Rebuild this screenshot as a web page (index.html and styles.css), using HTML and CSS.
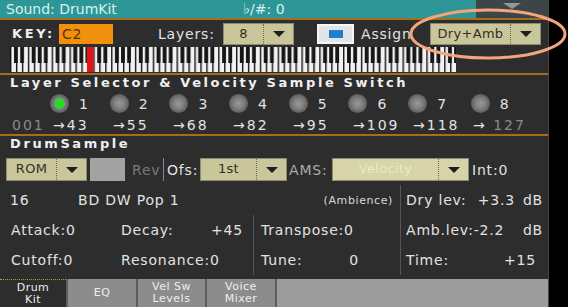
FILE: index.html
```html
<!DOCTYPE html>
<html lang="en">
<head>
  <meta charset="UTF-8">
  <meta name="viewport" content="width=device-width, initial-scale=1.0">
  <title>Sound: DrumKit</title>
  <link rel="stylesheet" href="styles.css">
</head>
<body>
  <div class="screen">

    <!-- Title bar -->
    <div class="title-bar">
      <span class="title">Sound: DrumKit</span>
      <span class="transpose"><span class="flat">♭</span>/#: 0</span>
      <div class="menu-tab"><span class="menu-arrow"></span></div>
    </div>

    <!-- Key / Layers / Assign row -->
    <div class="key-row">
      <span class="head key-label">KEY:</span>
      <span class="key-box">C2</span>
      <span class="layers-label">Layers:</span>
      <div class="select layers-select"><span class="val">8</span><span class="arrow"></span></div>
      <span class="check"><span class="check-mark"></span></span>
      <span class="assign-label">Assign</span>
      <div class="select assign-select"><span class="val">Dry+Amb</span><span class="arrow"></span></div>
    </div>

    <svg class="keyboard" width="446" height="25" viewBox="0 0 446 25">
      <defs>
        <pattern id="octave" width="41.63" height="25" patternUnits="userSpaceOnUse">
          <rect width="41.63" height="25" fill="#f2f2f2"/>
          <g fill="#151515">
            <rect x="0" width="1.4" height="25"/>
            <rect x="5.95" width="1.4" height="25"/>
            <rect x="11.89" width="1.4" height="25"/>
            <rect x="17.84" width="1.4" height="25"/>
            <rect x="23.79" width="1.4" height="25"/>
            <rect x="29.73" width="1.4" height="25"/>
            <rect x="35.68" width="1.4" height="25"/>
            <rect x="4.0" width="3.8" height="16"/>
            <rect x="10.2" width="3.8" height="16"/>
            <rect x="21.7" width="3.8" height="16"/>
            <rect x="27.8" width="3.8" height="16"/>
            <rect x="33.9" width="3.8" height="16"/>
          </g>
        </pattern>
      </defs>
      <rect width="446" height="25" fill="url(#octave)"/>
      <rect x="77" width="6.5" height="25" fill="#e3141a"/>
    </svg>

    <!-- Layer Selector -->
    <div class="section layer-section">
      <div class="head section-title">Layer Selector &amp; Velocity Sample Switch</div>
      <div class="layer-row">
        <div class="layer"><span class="knob on"></span><span class="num">1</span></div>
        <div class="layer"><span class="knob"></span><span class="num">2</span></div>
        <div class="layer"><span class="knob"></span><span class="num">3</span></div>
        <div class="layer"><span class="knob"></span><span class="num">4</span></div>
        <div class="layer"><span class="knob"></span><span class="num">5</span></div>
        <div class="layer"><span class="knob"></span><span class="num">6</span></div>
        <div class="layer"><span class="knob"></span><span class="num">7</span></div>
        <div class="layer last"><span class="knob"></span><span class="num">8</span></div>
      </div>
      <div class="vel-row">
        <span class="vel-start">001</span>
        <span class="vel">→43</span>
        <span class="vel">→55</span>
        <span class="vel">→68</span>
        <span class="vel">→82</span>
        <span class="vel">→95</span>
        <span class="vel">→109</span>
        <span class="vel">→118</span>
        <span class="vel">→ <span class="dim">127</span></span>
      </div>
    </div>

    <!-- Drum Sample -->
    <div class="section sample-section">
      <div class="head section-title">DrumSample</div>
      <div class="ctrl-row">
        <div class="select rom-select"><span class="val">ROM</span><span class="arrow"></span></div>
        <span class="rev-box"></span>
        <span class="rev-label">Rev</span>
        <span class="vline"></span>
        <span class="ofs-label">Ofs:</span>
        <div class="select ofs-select"><span class="val">1st</span><span class="arrow"></span></div>
        <span class="ams-label">AMS:</span>
        <div class="select ams-select disabled"><span class="val">Velocity</span><span class="arrow"></span></div>
        <span class="int-label">Int:0</span>
      </div>

      <div class="info-row">
        <div class="cell cell-ab">
          <span class="sample-num">16</span>
          <span class="sample-name">BD DW Pop 1</span>
          <span class="sample-cat">(Ambience)</span>
        </div>
        <div class="cell cell-c">
          <span class="lbl">Dry lev:</span>
          <span class="value">+3.3</span>
          <span class="unit">dB</span>
        </div>
      </div>

      <div class="info-row">
        <div class="cell cell-a">
          <span class="first">Attack:0</span>
          <span class="lbl">Decay:</span>
          <span class="value">+45</span>
        </div>
        <div class="cell cell-b">
          <span class="lbl">Transpose:0</span>
        </div>
        <div class="cell cell-c">
          <span class="lbl">Amb.lev:-2.2</span>
          <span class="unit">dB</span>
        </div>
      </div>

      <div class="info-row">
        <div class="cell cell-a">
          <span class="first">Cutoff:0</span>
          <span class="lbl">Resonance:0</span>
        </div>
        <div class="cell cell-b">
          <span class="lbl">Tune:</span>
          <span class="value tune-value">0</span>
        </div>
        <div class="cell cell-c">
          <span class="lbl">Time:</span>
          <span class="value time-value">+15</span>
        </div>
      </div>
    </div>

    <!-- Page tabs -->
    <div class="tabs">
      <div class="tab active" style="width:66px">Drum<br>Kit</div>
      <div class="tab" style="width:68px">EQ</div>
      <div class="tab" style="width:67px">Vel Sw<br>Levels</div>
      <div class="tab" style="width:68px">Voice<br>Mixer</div>
      <div class="tab-fill"></div>
    </div>

    <!-- Highlight annotation -->
    <svg class="annot" width="162" height="56" viewBox="0 0 162 56">
      <ellipse cx="80" cy="27" rx="77" ry="24" fill="none" stroke="#f3a57c" stroke-width="3"/>
    </svg>
  </div>
</body>
</html>
```

FILE: styles.css
```css
/* Base */
* {
  box-sizing: border-box;
}

body {
  margin: 0;
  background: #000;
  font-family: "DejaVu Sans", sans-serif;
  font-size: 14px;
  color: #e2e2e2;
  letter-spacing: 0.8px;
  overflow: hidden;
}

.screen {
  position: relative;
  width: 549px;
  height: 307px;
  background: #2d2d2d;
  border-right: 1px solid #444;
}

.head {
  font-weight: bold;
  font-size: 13px;
  letter-spacing: 2.6px;
  color: #f0f0f0;
}

/* Title bar */
.title-bar {
  display: flex;
  align-items: center;
  height: 20px;
  background: #2e9696;
  border-bottom: 2px solid #a86c1e;
  color: #d4f2ee;
  letter-spacing: 0;
}

.title {
  width: 243px;
  padding-left: 6px;
}

.transpose {
  flex: 1;
}

.flat {
  font-size: 15px;
}

.menu-tab {
  width: 72px;
  height: 18px;
  background: #3c4646;
  display: flex;
  justify-content: center;
  padding-top: 3px;
}

.menu-arrow {
  height: 0;
  border-left: 9px solid transparent;
  border-right: 9px solid transparent;
  border-top: 6px solid #8c9a9a;
}

/* Key row */
.key-row {
  display: flex;
  align-items: center;
  height: 27px;
}

.key-label {
  margin-left: 12px;
  width: 47px;
}

.key-box {
  width: 54px;
  height: 20px;
  line-height: 20px;
  padding-left: 3px;
  background: #f0900c;
  color: #5a3000;
}

.layers-label {
  margin-left: 45px;
  width: 65px;
}

.layers-select {
  width: 71px;
}

.check {
  margin-left: 23px;
  width: 37px;
  height: 20px;
  background: #e4e4e4;
  border: 2px solid #f6f6f6;
  display: flex;
  align-items: center;
  justify-content: center;
}

.check-mark {
  width: 14px;
  height: 8px;
  background: #1e7fd0;
}

.assign-label {
  margin-left: 7px;
  width: 69px;
}

.assign-select {
  width: 111px;
}

/* Select boxes */
.select {
  display: flex;
  height: 22px;
  background: #c9c69c;
  border: 1px solid #8e8c70;
  color: #33311f;
  font-size: 13px;
  letter-spacing: 0.3px;
}

.select .val {
  flex: 1;
  text-align: center;
  line-height: 20px;
  border-right: 1px dotted #6e6b50;
}

.select .arrow {
  width: 29px;
  display: flex;
  align-items: center;
  justify-content: center;
}

.select .arrow::before {
  content: "";
  border-left: 6px solid transparent;
  border-right: 6px solid transparent;
  border-top: 6px solid #1e1e1e;
}

.select.disabled {
  background: #d6d4a8;
  color: #ebe9c8;
}

/* Keyboard */
.keyboard {
  display: block;
  margin-left: 10px;
}

/* Sections */
.section {
  border-top: 2px solid #a86c1e;
}

.layer-section {
  margin-top: 1px;
}

.section-title {
  line-height: 15px;
  padding-left: 10px;
}

.layer-row {
  display: flex;
  align-items: center;
  height: 27px;
  padding-left: 50px;
}

.layer {
  display: flex;
  align-items: center;
  width: 59.7px;
}

.layer.last {
  margin-left: 3px;
}

.knob {
  position: relative;
  width: 19px;
  height: 19px;
  border-radius: 50%;
  background: radial-gradient(circle, #9a9a9a 0, #7e7e7e 40%, #5c5c5c 72%, #3c3c3c 100%);
}

.knob.on::after {
  content: "";
  position: absolute;
  left: 5px;
  top: 5px;
  width: 9px;
  height: 9px;
  border-radius: 50%;
  background: #1fe01f;
  box-shadow: 0 0 2px #3f3;
}

.num {
  margin-left: 10px;
}

.vel-row {
  display: flex;
  height: 17px;
  line-height: 17px;
  padding-left: 12px;
  letter-spacing: 2px;
}

.vel-start {
  width: 41px;
  color: #8a8a8a;
}

.vel {
  width: 60px;
}

.dim {
  color: #8a8a8a;
}

/* Drum sample controls */
.ctrl-row {
  display: flex;
  align-items: center;
  height: 23px;
  margin-top: 7px;
}

.ctrl-row .select {
  height: 23px;
}

.rom-select {
  margin-left: 6px;
  width: 81px;
}

.rev-box {
  margin-left: 3px;
  width: 35px;
  height: 23px;
  background: #a2a2a2;
}

.rev-label {
  margin-left: 7px;
  width: 31px;
  color: #7a7a7a;
}

.vline {
  width: 1px;
  height: 23px;
  background: #888;
}

.ofs-label {
  margin-left: 3px;
  width: 33px;
}

.ofs-select {
  width: 87px;
}

.ams-label {
  margin-left: 2px;
  width: 43px;
  color: #aaa;
}

.ams-select {
  width: 137px;
}

.int-label {
  margin-left: 3px;
}

/* Parameter rows */
.info-row {
  display: flex;
  height: 30px;
}

.ctrl-row + .info-row {
  margin-top: 4px;
}

.cell {
  display: flex;
  align-items: center;
}

.cell-ab {
  width: 400px;
  padding-left: 10px;
  padding-right: 7px;
}

.cell-a {
  width: 253px;
  padding-left: 11px;
  padding-right: 10px;
}

.cell-b {
  width: 147px;
  padding-left: 7px;
  border-left: 1px solid #555;
}

.cell-c {
  flex: 1;
  padding-left: 5px;
  padding-right: 5px;
  border-left: 1px solid #555;
}

.cell .lbl {
  flex: 1;
}

.first {
  width: 110px;
}

.sample-num {
  width: 68px;
}

.sample-name {
  flex: 1;
}

.sample-cat {
  font-size: 11px;
  letter-spacing: 0.6px;
  color: #d8d8d8;
}

.unit {
  margin-left: 8px;
}

.tune-value {
  padding-right: 41px;
}

.time-value {
  padding-right: 7px;
}

/* Tabs */
.tabs {
  display: flex;
  gap: 2px;
  height: 28px;
  margin-top: 4px;
  background: #5e5e5e;
}

.tab {
  display: flex;
  align-items: center;
  justify-content: center;
  text-align: center;
  background: #8c8c8c;
  color: #eeeeee;
  font-size: 11px;
  line-height: 12px;
  letter-spacing: 0.5px;
}

.tab.active {
  background: #2d2d2d;
  border-top: 1px dotted #b0a040;
}

.tab-fill {
  flex: 1;
  background: #9c9c9c;
}

/* Annotation */
.annot {
  position: absolute;
  left: 408px;
  top: 7px;
}
```
